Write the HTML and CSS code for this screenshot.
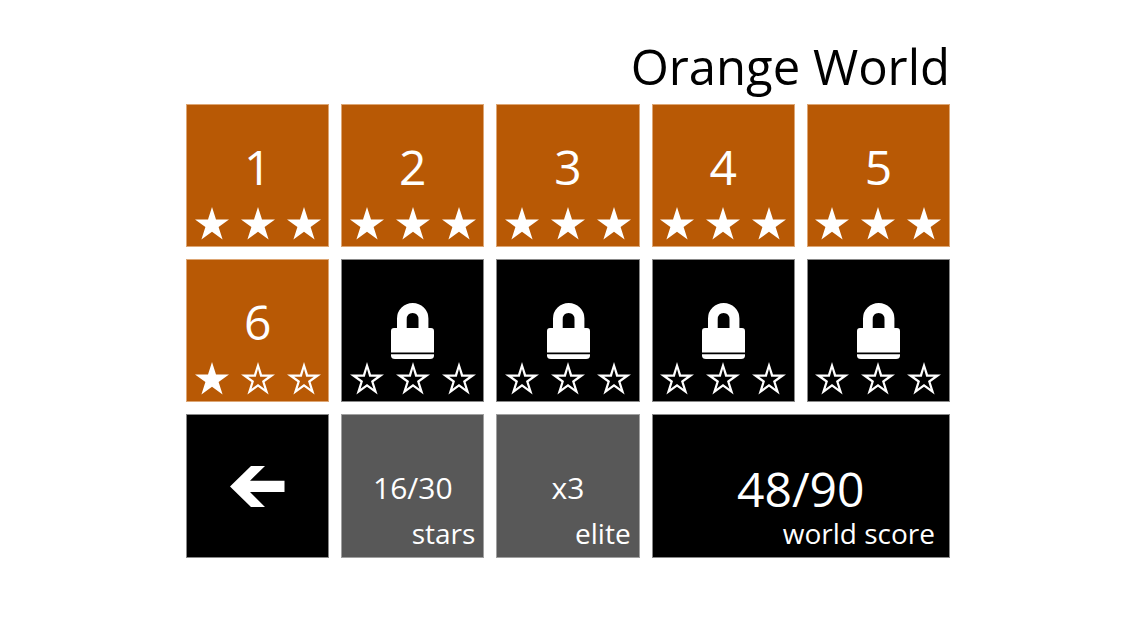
FILE: index.html
```html
<!DOCTYPE html>
<html lang="en">
<head>
  <meta charset="UTF-8" />
  <meta name="viewport" content="width=device-width, initial-scale=1.0"/>
  <title>Orange World</title>
  <link rel="stylesheet" href="styles.css">
</head>
<body>
  <svg class="defs" aria-hidden="true">
    <symbol id="star" viewBox="0 0 34 33">
      <path d="M17 0 L21 12.4 H34 L23.6 20 L27.6 32.6 L17 24.8 L6.4 32.6 L10.4 20 L0 12.4 H13 Z" fill="#fff"/>
    </symbol>
    <symbol id="star-empty" viewBox="0 0 34 33">
      <path fill-rule="evenodd" d="M17 0 L21 12.4 H34 L23.6 20 L27.6 32.6 L17 24.8 L6.4 32.6 L10.4 20 L0 12.4 H13 Z M17 7 L14.8 14.7 H7.2 L13 19.1 L10.6 26.8 L17 22 L23.4 26.8 L21 19.1 L26.8 14.7 H19.2 Z" fill="#fff"/>
    </symbol>
    <symbol id="lock" viewBox="0 0 43 56">
      <path fill-rule="evenodd" d="M6 25 V15.5 A15.7 15.5 0 0 1 37.4 15.5 V25 H40 Q43 25 43 28 V49.5 H0 V28 Q0 25 3 25 Z M15.7 25 H27.5 V16.5 Q27.5 10 21.6 10 Q15.7 10 15.7 16.5 Z" fill="#fff"/>
      <path d="M0 51.3 H43 V52.5 Q43 56 39 56 H4 Q0 56 0 52.5 Z" fill="#fff"/>
    </symbol>
  </svg>

  <main class="container">
    <h1>Orange World</h1>
    <div class="grid">
      <button class="tile level">
        <span class="number">1</span>
        <span class="stars"><svg><use href="#star"/></svg><svg><use href="#star"/></svg><svg><use href="#star"/></svg></span>
      </button>
      <button class="tile level">
        <span class="number">2</span>
        <span class="stars"><svg><use href="#star"/></svg><svg><use href="#star"/></svg><svg><use href="#star"/></svg></span>
      </button>
      <button class="tile level">
        <span class="number">3</span>
        <span class="stars"><svg><use href="#star"/></svg><svg><use href="#star"/></svg><svg><use href="#star"/></svg></span>
      </button>
      <button class="tile level">
        <span class="number">4</span>
        <span class="stars"><svg><use href="#star"/></svg><svg><use href="#star"/></svg><svg><use href="#star"/></svg></span>
      </button>
      <button class="tile level">
        <span class="number">5</span>
        <span class="stars"><svg><use href="#star"/></svg><svg><use href="#star"/></svg><svg><use href="#star"/></svg></span>
      </button>

      <button class="tile level">
        <span class="number">6</span>
        <span class="stars"><svg><use href="#star"/></svg><svg><use href="#star-empty"/></svg><svg><use href="#star-empty"/></svg></span>
      </button>
      <button class="tile locked" aria-label="Level 7, locked">
        <svg class="lock"><use href="#lock"/></svg>
        <span class="stars"><svg><use href="#star-empty"/></svg><svg><use href="#star-empty"/></svg><svg><use href="#star-empty"/></svg></span>
      </button>
      <button class="tile locked" aria-label="Level 8, locked">
        <svg class="lock"><use href="#lock"/></svg>
        <span class="stars"><svg><use href="#star-empty"/></svg><svg><use href="#star-empty"/></svg><svg><use href="#star-empty"/></svg></span>
      </button>
      <button class="tile locked" aria-label="Level 9, locked">
        <svg class="lock"><use href="#lock"/></svg>
        <span class="stars"><svg><use href="#star-empty"/></svg><svg><use href="#star-empty"/></svg><svg><use href="#star-empty"/></svg></span>
      </button>
      <button class="tile locked" aria-label="Level 10, locked">
        <svg class="lock"><use href="#lock"/></svg>
        <span class="stars"><svg><use href="#star-empty"/></svg><svg><use href="#star-empty"/></svg><svg><use href="#star-empty"/></svg></span>
      </button>

      <button class="tile back" aria-label="Back">
        <svg class="arrow" viewBox="0 0 55 41"><path d="M0 20.5 L21 0 H35 L20 14.7 H54.5 V26 H20 L35 41 H21 Z" fill="#fff"/></svg>
      </button>
      <div class="tile stat">
        <span class="value">16/30</span>
        <span class="label">stars</span>
      </div>
      <div class="tile stat">
        <span class="value">x3</span>
        <span class="label">elite</span>
      </div>
      <div class="tile score">
        <span class="value">48/90</span>
        <span class="label">world score</span>
      </div>
    </div>
  </main>
</body>
</html>
```
FILE: styles.css
```css
* { box-sizing: border-box; }
body { margin: 0; background: #fff; font-family: "Open Sans", "Noto Sans", sans-serif; font-weight: 400; }
.defs { display: none; }
.container { max-width: 764px; margin: 0 auto; padding-top: 32px; }
h1 { margin: 0; padding-bottom: 4px; font-size: 49px; line-height: 68px; font-weight: 400; text-align: right; }
.grid { display: grid; grid-template-columns: repeat(5, 1fr); gap: 12px; }

.tile { display: flex; flex-direction: column; align-items: center; justify-content: flex-end; aspect-ratio: 1; margin: 0; padding: 0 0 6px; border: 1px solid #888; background: #000; color: #fff; font: inherit; }
button.tile { cursor: pointer; }
.level { background: #b85905; border-color: #dda674; }
.stat { background: #585858; border-color: #a0a0a0; }
.back { justify-content: center; padding: 0; }
.score { grid-column: span 2; aspect-ratio: auto; }
.stat, .score { padding-bottom: 4px; }

.number { font-size: 48px; line-height: 72px; }
.stars { display: flex; gap: 12px; margin-top: 4px; }
.stars svg { width: 34px; height: 33px; }
.lock { width: 43px; height: 56px; }
.locked .stars { margin-top: 3px; }
.arrow { width: 55px; height: 41px; }

.value { font-size: 30px; line-height: 48px; }
.label { align-self: flex-end; padding-right: 8px; font-size: 28px; line-height: 40px; }
.stat .value { line-height: 50px; }
.score .value { font-size: 48px; }
.score .label { padding-right: 14px; }
```
